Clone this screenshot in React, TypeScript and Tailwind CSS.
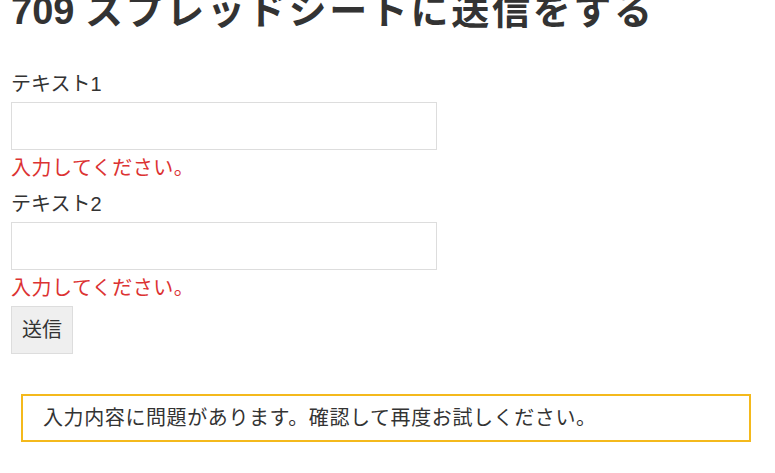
const font = { fontFamily: '"Liberation Sans", "Noto Sans CJK JP", sans-serif' };

export default function App() {
  return (
    <div className="min-h-screen bg-white text-[#333] overflow-hidden" style={font}>
      <div className="w-[750px] ml-[11px]">
        <h1 className="-mt-[12px] h-[78px] text-[38px] leading-[46px] font-bold text-[#333] whitespace-nowrap">
          709 <span className="tracking-[2.7px]">スプレッドシートに送信をする</span>
        </h1>

        <form className="text-[20px] leading-[36px]" onSubmit={(e) => e.preventDefault()}>
          {/* Field 1 */}
          <label className="block">テキスト1</label>
          <input
            type="text"
            className="block w-[426px] h-[48px] border border-[#ddd] bg-white px-3 outline-none"
          />
          <p className="text-[#dc3232] tracking-[0.5px]">入力してください。</p>

          {/* Field 2 */}
          <label className="block">テキスト2</label>
          <input
            type="text"
            className="block w-[426px] h-[48px] border border-[#ddd] bg-white px-3 outline-none"
          />
          <p className="text-[#dc3232] tracking-[0.5px]">入力してください。</p>

          <button
            type="submit"
            className="block h-[48px] px-[10px] bg-[#efefef] border border-[#ddd] text-[#333] text-[20px]"
          >
            送信
          </button>

          {/* Response */}
          <div className="mt-[40px] mx-[10px] border-2 border-[#f4b91c] px-[20px] py-[4px] tracking-[0.6px]">
            入力内容に問題があります。確認して再度お試しください。
          </div>
        </form>
      </div>
    </div>
  );
}
